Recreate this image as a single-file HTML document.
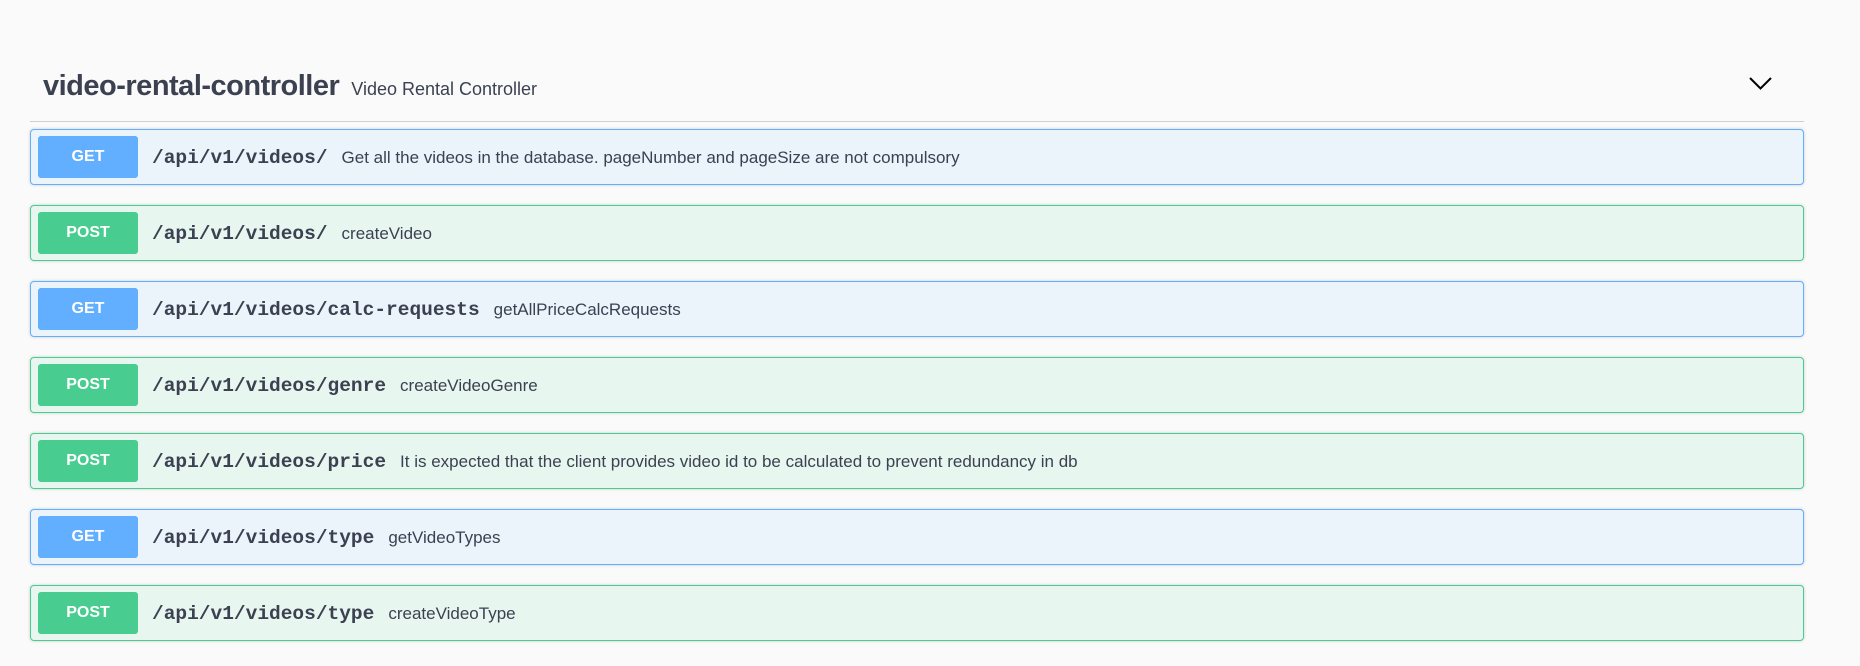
<!DOCTYPE html>
<html><head><meta charset="utf-8"><style>
body{margin:0;background:#fafafa;width:1860px;height:666px;overflow:hidden;font-family:"Liberation Sans",sans-serif;color:#3b4151}
.hdr{position:absolute;left:43px;top:70px;display:flex;align-items:baseline}
.t{font-weight:bold;font-size:29px;letter-spacing:-0.5px;color:#3b4151}
.d{font-size:18px;margin-left:12px;color:#3b4151}
.sep{position:absolute;left:30px;top:121px;width:1774px;height:1px;background:#cfcfcf}
.chev{position:absolute;left:1749px;top:76px}
.row{position:absolute;left:30px;width:1772px;height:54px;border:1px solid;border-radius:4px;box-shadow:0 0 3px rgba(0,0,0,.19);display:flex;align-items:center}
.get{background:#ebf3fb;border-color:#61affe}
.post{background:#e8f6f0;border-color:#49cc90}
.b{width:100px;height:42px;margin-left:7px;border-radius:3px;color:#fff;font-weight:bold;font-size:16px;display:flex;align-items:center;justify-content:center}
.get .b{background:#61affe}.post .b{background:#49cc90}
.p{font-family:"Liberation Mono",monospace;font-weight:bold;font-size:19.5px;margin-left:14px;color:#3b4151;position:relative;top:1px}
.s{font-size:17px;margin-left:14px;color:#3b4151;position:relative;top:1px}
</style></head><body>
<div class="hdr"><span class="t">video-rental-controller</span><span class="d">Video Rental Controller</span></div>
<svg class="chev" width="24" height="16" viewBox="0 0 24 16"><path d="M1 2 L11.5 12.5 L22 2" fill="none" stroke="#000" stroke-width="2"/></svg>
<div class="sep"></div>
<div class="row get" style="top:129px"><div class="b">GET</div><span class="p">/api/v1/videos/</span><span class="s">Get all the videos in the database. pageNumber and pageSize are not compulsory</span></div>
<div class="row post" style="top:205px"><div class="b">POST</div><span class="p">/api/v1/videos/</span><span class="s">createVideo</span></div>
<div class="row get" style="top:281px"><div class="b">GET</div><span class="p">/api/v1/videos/calc-requests</span><span class="s">getAllPriceCalcRequests</span></div>
<div class="row post" style="top:357px"><div class="b">POST</div><span class="p">/api/v1/videos/genre</span><span class="s">createVideoGenre</span></div>
<div class="row post" style="top:433px"><div class="b">POST</div><span class="p">/api/v1/videos/price</span><span class="s">It is expected that the client provides video id to be calculated to prevent redundancy in db</span></div>
<div class="row get" style="top:509px"><div class="b">GET</div><span class="p">/api/v1/videos/type</span><span class="s">getVideoTypes</span></div>
<div class="row post" style="top:585px"><div class="b">POST</div><span class="p">/api/v1/videos/type</span><span class="s">createVideoType</span></div>
</body></html>
